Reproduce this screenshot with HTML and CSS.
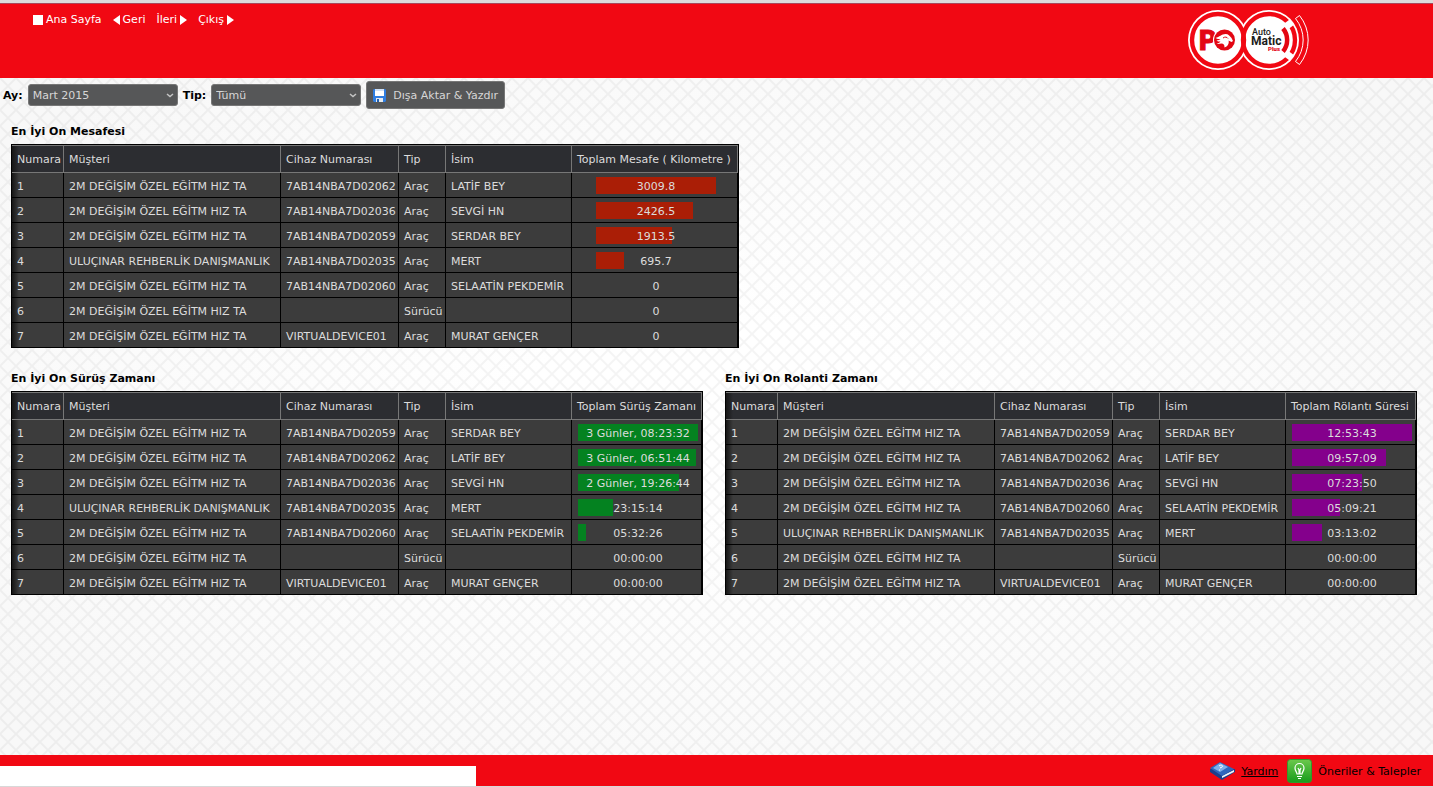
FILE: index.html
```html
<!DOCTYPE html>
<html lang="tr">
<head>
<meta charset="utf-8">
<title>Auto Matic Plus</title>
<link rel="stylesheet" href="styles.css">
</head>
<body>
<header class="top">
  <nav class="nav">
    <a href="#"><svg width="10" height="10" viewBox="0 0 10 10"><path d="M0 0h10v10H0z" fill="#fff"/></svg>Ana Sayfa</a>
    <a href="#"><svg width="7" height="10" viewBox="0 0 7 10"><path d="M7 0v10L0 5z" fill="#fff"/></svg>Geri</a>
    <a href="#">İleri<svg width="7" height="10" viewBox="0 0 7 10"><path d="M0 0v10l7-5z" fill="#fff"/></svg></a>
    <a href="#">Çıkış<svg width="7" height="10" viewBox="0 0 7 10"><path d="M0 0v10l7-5z" fill="#fff"/></svg></a>
  </nav>
  <svg class="logo" width="122" height="62" viewBox="0 0 122 62" role="img" aria-label="PO Auto Matic Plus">
    <circle cx="31" cy="31" r="30" fill="#fff"/>
    <circle cx="82" cy="31" r="30" fill="#fff"/>
    <circle cx="31" cy="31" r="26" fill="none" stroke="#f10813" stroke-width="4.4"/>
    <circle cx="82" cy="31" r="26" fill="none" stroke="#f10813" stroke-width="4.4"/>
    <path d="M97 19l8-6M97 43l8 6" stroke="#fff" stroke-width="7"/>
    <path d="M96 19.500A18 18 0 0 1 96 42.500" fill="none" stroke="#e30613" stroke-width="4.500"/>
    <path d="M108.500 9.500l4-3A39 39 0 0 1 112.500 55.500l-4-3A34 34 0 0 0 108.500 9.500z" fill="none" stroke="#fff" stroke-width="1"/>
    <text class="logo-po" x="12" y="41">P</text>
    <circle cx="37.500" cy="31" r="11.500" fill="#fff"/>
    <circle cx="37.500" cy="31" r="10.500" fill="#e30613"/>
    <path d="M28.500 29c4-1 6-4 10-4 3 0 4 2 6 4l1.500 3-1.500 1-3-1.500c1 3-1 6-4 7 0-3-1-4-3-4-2 0-3 1-5 0 2 0 3-1 4-2-2 0-3 0-4-1 2 0 3-1 4-1.500-2 0-3.500 0-5-1z" fill="#fff"/>
    <path d="M36 29c2-1.500 4-1 5 .5" stroke="#e30613" fill="none"/>
    <text class="logo-auto" x="65" y="26">Auto</text>
    <text class="logo-matic" x="64" y="36">Matic</text>
    <text class="logo-plus" x="81" y="42">Plus</text>
  </svg>
</header>

<main class="main">
  <form class="toolbar">
    <label for="month">Ay:</label>
    <span class="select">
      <select id="month"><option>Mart 2015</option></select>
      <svg width="8" height="5" viewBox="0 0 8 5"><path d="M1 1l3 2.500L7 1" fill="none" stroke="#c4c4c4" stroke-width="1.500"/></svg>
    </span>
    <label for="type">Tip:</label>
    <span class="select">
      <select id="type"><option>Tümü</option></select>
      <svg width="8" height="5" viewBox="0 0 8 5"><path d="M1 1l3 2.500L7 1" fill="none" stroke="#c4c4c4" stroke-width="1.500"/></svg>
    </span>
    <button type="button" class="export">
      <svg width="13" height="13" viewBox="0 0 13 13"><path d="M1 0h11l1 1v11l-1 1H1l-1-1V1z" fill="#2f7de0"/><path d="M2 0h9v7H2z" fill="#fff"/><path d="M2 0h9v2H2z" fill="#cfe0f5"/><path d="M3 9h7v4H3z" fill="#e4e9ef"/><path d="M4 10h2v3H4z" fill="#2560ae"/></svg>
      <span>Dışa Aktar &amp; Yazdır</span>
    </button>
  </form>

  <section class="report">
    <h2>En İyi On Mesafesi</h2>
    <table class="grid wide red">
      <colgroup><col class="c-no"><col class="c-customer"><col class="c-device"><col class="c-type"><col class="c-name"><col></colgroup>
      <thead><tr><th>Numara</th><th>Müşteri</th><th>Cihaz Numarası</th><th>Tip</th><th>İsim</th><th>Toplam Mesafe ( Kilometre )</th></tr></thead>
      <tbody>
        <tr><td>1</td><td>2M DEĞİŞİM ÖZEL EĞİTM HIZ TA</td><td>7AB14NBA7D02062</td><td>Araç</td><td>LATİF BEY</td><td><div class="meter"><i style="width:100%"></i><span>3009.8</span></div></td></tr>
        <tr><td>2</td><td>2M DEĞİŞİM ÖZEL EĞİTM HIZ TA</td><td>7AB14NBA7D02036</td><td>Araç</td><td>SEVGİ HN</td><td><div class="meter"><i style="width:81%"></i><span>2426.5</span></div></td></tr>
        <tr><td>3</td><td>2M DEĞİŞİM ÖZEL EĞİTM HIZ TA</td><td>7AB14NBA7D02059</td><td>Araç</td><td>SERDAR BEY</td><td><div class="meter"><i style="width:63%"></i><span>1913.5</span></div></td></tr>
        <tr><td>4</td><td>ULUÇINAR REHBERLİK DANIŞMANLIK</td><td>7AB14NBA7D02035</td><td>Araç</td><td>MERT</td><td><div class="meter"><i style="width:23%"></i><span>695.7</span></div></td></tr>
        <tr><td>5</td><td>2M DEĞİŞİM ÖZEL EĞİTM HIZ TA</td><td>7AB14NBA7D02060</td><td>Araç</td><td>SELAATİN PEKDEMİR</td><td><div class="meter"><span>0</span></div></td></tr>
        <tr><td>6</td><td>2M DEĞİŞİM ÖZEL EĞİTM HIZ TA</td><td></td><td>Sürücü</td><td></td><td><div class="meter"><span>0</span></div></td></tr>
        <tr><td>7</td><td>2M DEĞİŞİM ÖZEL EĞİTM HIZ TA</td><td>VIRTUALDEVICE01</td><td>Araç</td><td>MURAT GENÇER</td><td><div class="meter"><span>0</span></div></td></tr>
      </tbody>
    </table>
  </section>

  <div class="pair">
    <section class="report">
      <h2>En İyi On Sürüş Zamanı</h2>
      <table class="grid green">
        <colgroup><col class="c-no"><col class="c-customer"><col class="c-device"><col class="c-type"><col class="c-name"><col></colgroup>
        <thead><tr><th>Numara</th><th>Müşteri</th><th>Cihaz Numarası</th><th>Tip</th><th>İsim</th><th>Toplam Sürüş Zamanı</th></tr></thead>
        <tbody>
          <tr><td>1</td><td>2M DEĞİŞİM ÖZEL EĞİTM HIZ TA</td><td>7AB14NBA7D02059</td><td>Araç</td><td>SERDAR BEY</td><td><div class="meter"><i style="width:100%"></i><span>3 Günler, 08:23:32</span></div></td></tr>
          <tr><td>2</td><td>2M DEĞİŞİM ÖZEL EĞİTM HIZ TA</td><td>7AB14NBA7D02062</td><td>Araç</td><td>LATİF BEY</td><td><div class="meter"><i style="width:98%"></i><span>3 Günler, 06:51:44</span></div></td></tr>
          <tr><td>3</td><td>2M DEĞİŞİM ÖZEL EĞİTM HIZ TA</td><td>7AB14NBA7D02036</td><td>Araç</td><td>SEVGİ HN</td><td><div class="meter"><i style="width:84%"></i><span>2 Günler, 19:26:44</span></div></td></tr>
          <tr><td>4</td><td>ULUÇINAR REHBERLİK DANIŞMANLIK</td><td>7AB14NBA7D02035</td><td>Araç</td><td>MERT</td><td><div class="meter"><i style="width:29%"></i><span>23:15:14</span></div></td></tr>
          <tr><td>5</td><td>2M DEĞİŞİM ÖZEL EĞİTM HIZ TA</td><td>7AB14NBA7D02060</td><td>Araç</td><td>SELAATİN PEKDEMİR</td><td><div class="meter"><i style="width:7%"></i><span>05:32:26</span></div></td></tr>
          <tr><td>6</td><td>2M DEĞİŞİM ÖZEL EĞİTM HIZ TA</td><td></td><td>Sürücü</td><td></td><td><div class="meter"><span>00:00:00</span></div></td></tr>
          <tr><td>7</td><td>2M DEĞİŞİM ÖZEL EĞİTM HIZ TA</td><td>VIRTUALDEVICE01</td><td>Araç</td><td>MURAT GENÇER</td><td><div class="meter"><span>00:00:00</span></div></td></tr>
        </tbody>
      </table>
    </section>
    <section class="report">
      <h2>En İyi On Rolanti Zamanı</h2>
      <table class="grid purple">
        <colgroup><col class="c-no"><col class="c-customer"><col class="c-device"><col class="c-type"><col class="c-name"><col></colgroup>
        <thead><tr><th>Numara</th><th>Müşteri</th><th>Cihaz Numarası</th><th>Tip</th><th>İsim</th><th>Toplam Rölantı Süresi</th></tr></thead>
        <tbody>
          <tr><td>1</td><td>2M DEĞİŞİM ÖZEL EĞİTM HIZ TA</td><td>7AB14NBA7D02059</td><td>Araç</td><td>SERDAR BEY</td><td><div class="meter"><i style="width:100%"></i><span>12:53:43</span></div></td></tr>
          <tr><td>2</td><td>2M DEĞİŞİM ÖZEL EĞİTM HIZ TA</td><td>7AB14NBA7D02062</td><td>Araç</td><td>LATİF BEY</td><td><div class="meter"><i style="width:78%"></i><span>09:57:09</span></div></td></tr>
          <tr><td>3</td><td>2M DEĞİŞİM ÖZEL EĞİTM HIZ TA</td><td>7AB14NBA7D02036</td><td>Araç</td><td>SEVGİ HN</td><td><div class="meter"><i style="width:58%"></i><span>07:23:50</span></div></td></tr>
          <tr><td>4</td><td>2M DEĞİŞİM ÖZEL EĞİTM HIZ TA</td><td>7AB14NBA7D02060</td><td>Araç</td><td>SELAATİN PEKDEMİR</td><td><div class="meter"><i style="width:40%"></i><span>05:09:21</span></div></td></tr>
          <tr><td>5</td><td>ULUÇINAR REHBERLİK DANIŞMANLIK</td><td>7AB14NBA7D02035</td><td>Araç</td><td>MERT</td><td><div class="meter"><i style="width:25%"></i><span>03:13:02</span></div></td></tr>
          <tr><td>6</td><td>2M DEĞİŞİM ÖZEL EĞİTM HIZ TA</td><td></td><td>Sürücü</td><td></td><td><div class="meter"><span>00:00:00</span></div></td></tr>
          <tr><td>7</td><td>2M DEĞİŞİM ÖZEL EĞİTM HIZ TA</td><td>VIRTUALDEVICE01</td><td>Araç</td><td>MURAT GENÇER</td><td><div class="meter"><span>00:00:00</span></div></td></tr>
        </tbody>
      </table>
    </section>
  </div>
</main>

<footer class="bottom">
  <div class="status"></div>
  <div class="help">
    <a href="#" class="underlined"><svg width="25" height="18" viewBox="0 0 25 18"><path d="M0 7v3l12 8 13-8V7z" fill="#1d3f8c"/><path d="M12 14l12-6v2l-12 6z" fill="#eef2f8"/><path d="M0 6L10 0l14 7-12 7z" fill="#2f66bd"/><path d="M3 6l7-5 8 4-8 5z" fill="#7fb0ea"/><path d="M9 4c2-2 5 0 3 1l-2 1M9 8h1" stroke="#fff" fill="none"/></svg><span>Yardım</span></a>
    <a href="#"><svg width="25" height="24" viewBox="0 0 25 24"><defs><linearGradient id="leaf" x1="0" y1="0" x2="0" y2="1"><stop offset="0" stop-color="#6cc84c"/><stop offset="1" stop-color="#179c1c"/></linearGradient></defs><rect x=".5" y=".5" width="24" height="23" rx="3" fill="url(#leaf)" stroke="#2f9a2a"/><path d="M10 15c0-2-2-3-2-6a4.500 4.500 0 0 1 9 0c0 3-2 4-2 6zM10 17.500h5M11 19.500h3M11 9l1 2v4M14 9l-1 2v4" fill="none" stroke="#fff" stroke-width="1.200"/></svg><span>Öneriler &amp; Talepler</span></a>
  </div>
</footer>
</body>
</html>
```
FILE: styles.css
```css
* { box-sizing: border-box; }

body {
  margin: 0;
  min-height: 100vh;
  display: flex;
  flex-direction: column;
  font: 11px/14px "DejaVu Sans", Verdana, sans-serif;
  color: #000;
  background: #fbfbfb;
  border-bottom: 1px solid #d8d8d8;
}

a { color: inherit; text-decoration: none; }

.top {
  display: flex;
  justify-content: space-between;
  align-items: flex-start;
  height: 78px;
  padding: 6px 124px 0 33px;
  background: #f10813;
  border-top: 3px solid #dcdcdc;
  box-shadow: inset 0 1px #a8485a;
}

.nav {
  display: flex;
  gap: 11px;
  padding-top: 4px;
  color: #fff;
}

.nav a {
  display: flex;
  align-items: center;
  gap: 3px;
}

.logo { flex: none; }
.logo text { font-family: Roboto, sans-serif; font-weight: 700; }
.logo .logo-po { font-size: 27px; font-weight: 900; fill: #e30613; stroke: #e30613; }
.logo .logo-auto { font-size: 9px; font-weight: 500; fill: #1d1d1b; }
.logo .logo-matic { font-size: 12px; fill: #1d1d1b; }
.logo .logo-plus { font-size: 6px; font-weight: 900; fill: #e30613; }

/* Diamond lattice over a soft light centre */
.main {
  flex: 1;
  padding-bottom: 20px;
  background:
    url("data:image/svg+xml,%3Csvg xmlns='http://www.w3.org/2000/svg' width='16' height='16'%3E%3Cpath d='M-2 -2L18 18M18 -2L-2 18' stroke='%23000' stroke-opacity='.045' stroke-width='1.8' fill='none'/%3E%3C/svg%3E"),
    radial-gradient(ellipse at center, #fff 20%, #f8f8f8 90%);
}

.toolbar {
  display: flex;
  align-items: center;
  gap: 5px;
  padding: 3px;
}

.toolbar label {
  padding-top: 2px;
  font-weight: 700;
}

.select {
  display: grid;
  align-items: center;
  width: 150px;
}

.select > * { grid-area: 1 / 1; }

.select svg {
  justify-self: end;
  margin-right: 4px;
  pointer-events: none;
}

select,
.export {
  font: inherit;
  color: #d6d6d6;
  background: #565758;
  border: 1px solid #777;
  border-radius: 3px;
}

select {
  appearance: none;
  width: 100%;
  height: 22px;
  padding: 2px 4px 0;
}

.export {
  display: flex;
  align-items: center;
  gap: 7px;
  height: 28px;
  padding: 0 6px;
  white-space: nowrap;
}

.export span { padding-top: 2px; }

.report { padding-top: 13px; }

.report h2 {
  margin: 0 0 5px;
  font: inherit;
  font-weight: 700;
}

.main > .report { padding-left: 11px; }

.pair {
  display: flex;
  flex-wrap: wrap;
  gap: 22px;
  padding: 11px 0 0 11px;
}

.grid {
  width: 692px;
  table-layout: fixed;
  border-collapse: separate;
  border-spacing: 0;
  border: 1px solid #000;
  border-bottom: 0;
  background: #3c3c3c;
  color: #dcdcdc;
  white-space: nowrap;
}

.grid.wide { width: 728px; }

.c-no { width: 52px; }
.c-customer { width: 217px; }
.c-device { width: 118px; }
.c-type { width: 47px; }
.c-name { width: 126px; }

.grid th,
.grid td {
  height: 25px;
  padding: 3px 0 0 5px;
  text-align: left;
  border-right: 1px solid #000;
  border-bottom: 1px solid #000;
}

.grid th {
  height: 28px;
  padding-top: 2px;
  font-weight: 400;
  background: #2c2d31;
  border-color: #777;
  border-top: 1px solid #777;
}

.grid th:first-child,
.grid td:first-child {
  background-image: linear-gradient(to right, #161616, transparent 7px);
}

.grid td:last-child { padding: 0 2px 0 5px; }

.meter {
  display: grid;
  align-items: center;
  width: 120px;
  height: 17px;
  margin: 0 auto;
}

.meter > * { grid-area: 1 / 1; }
.meter i { height: 17px; }

.meter span {
  padding-top: 3px;
  text-align: center;
}

.red i { background: #aa1e06; }
.green i { background: #048220; }
.purple i { background: #84008c; }

.bottom {
  display: flex;
  justify-content: space-between;
  align-items: flex-end;
  height: 31px;
  background: #f10813;
}

.status {
  width: 476px;
  height: 20px;
  background: #fff;
}

.help {
  display: flex;
  align-items: center;
  align-self: stretch;
  gap: 9px;
  padding-right: 12px;
}

.help a {
  display: flex;
  align-items: center;
  gap: 6px;
}

.help span { padding-top: 2px; }

.underlined span { text-decoration: underline; }
```
